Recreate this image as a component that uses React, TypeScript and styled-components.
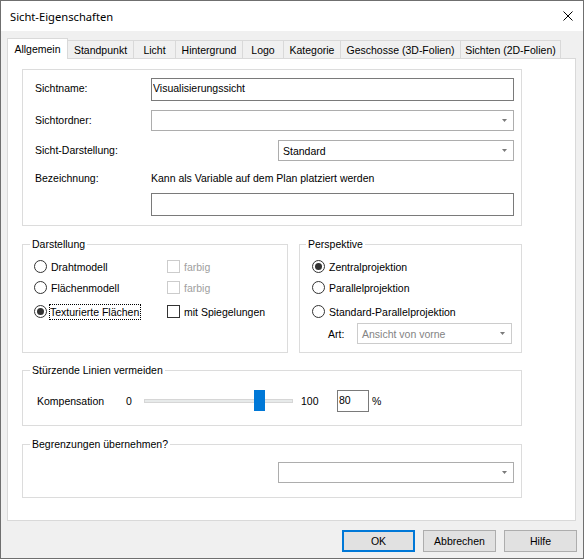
import React from 'react';
import styled, { createGlobalStyle } from 'styled-components';

const GlobalStyle = createGlobalStyle`
	* {
		box-sizing: border-box;
	}
	body {
		margin: 0;
		background: #ffffff;
		font-family: 'Liberation Sans', Arial, sans-serif;
		font-size: 10.5px;
		color: #000000;
	}
`;

const Window = styled.div`
	display: flex;
	flex-direction: column;
	width: 584px;
	height: 559px;
	border: 1px solid #6f6f6f;
	background: #f0f0f0;
`;

const TitleBar = styled.div`
	display: flex;
	align-items: center;
	justify-content: space-between;
	height: 30px;
	padding: 0 10px 0 9px;
	background: #ffffff;
`;

const Title = styled.span`
	font-family: 'Noto Sans', 'Open Sans', sans-serif;
	font-size: 11.2px;
	color: #000000;
`;

const Body = styled.div`
	display: flex;
	flex: 1;
	flex-direction: column;
	padding: 7px 7px 0 6px;
`;

const TabStrip = styled.div`
	display: flex;
	align-items: flex-end;
	height: 20px;
	position: relative;
	z-index: 1;
`;

const Tab = styled.div<{ $w: number; $active?: boolean; $first?: boolean }>`
	display: flex;
	align-items: center;
	justify-content: center;
	width: ${({ $w }) => $w}px;
	height: ${({ $active }) => ($active ? '21px' : '18px')};
	margin-bottom: ${({ $active }) => ($active ? '-1px' : '0')};
	background: ${({ $active }) => ($active ? '#ffffff' : '#f0f0f0')};
	border-top: 1px solid #d9d9d9;
	border-right: 1px solid #d9d9d9;
	border-left: ${({ $first }) => ($first ? '1px solid #d9d9d9' : 'none')};
	white-space: nowrap;
`;

const Panel = styled.div`
	display: flex;
	flex-direction: column;
	width: 569px;
	height: 463px;
	padding: 10px 0 0 14px;
	background: #ffffff;
	border: 1px solid #d9d9d9;
`;

const TopBox = styled.div`
	display: flex;
	flex-direction: column;
	width: 500px;
	height: 157px;
	padding: 8px 7px 0 12px;
	border: 1px solid #dcdcdc;
`;

const FormRow = styled.div<{ $h: number; $mt?: number }>`
	display: flex;
	align-items: center;
	height: ${({ $h }) => $h}px;
	margin-top: ${({ $mt }) => $mt || 0}px;
`;

const FieldLabel = styled.span<{ $raise?: number }>`
	width: 116px;
	flex-shrink: 0;
	line-height: 13px;
	margin-bottom: ${({ $raise }) => $raise || 0}px;
`;

const TextField = styled.input`
	flex: 1;
	height: 23px;
	padding: 0 1px 4px 1px;
	border: 1px solid #7a7a7a;
	border-radius: 0;
	background: #ffffff;
	font-family: inherit;
	font-size: inherit;
	color: #000000;
	outline: none;
`;

const Combo = styled.div<{ $w?: number; $push?: boolean; $disabled?: boolean }>`
	display: flex;
	align-items: center;
	justify-content: space-between;
	flex: ${({ $w }) => ($w ? 'none' : '1')};
	width: ${({ $w }) => ($w ? `${$w}px` : 'auto')};
	height: 21px;
	margin-left: ${({ $push }) => ($push ? 'auto' : '0')};
	padding: 0 6px 0 4px;
	border: 1px solid ${({ $disabled }) => ($disabled ? '#cccccc' : '#adadad')};
	background: #ffffff;
	color: ${({ $disabled }) => ($disabled ? '#838383' : '#000000')};
`;

const Arrow = () => (
	<svg width="5" height="3" viewBox="0 0 5 3">
		<path d="M0 0 H5 L2.5 3 Z" fill="#7a7a7a" />
	</svg>
);

const GroupRow = styled.div`
	display: flex;
	gap: 11px;
	margin-top: 12px;
`;

const Group = styled.fieldset<{ $w: number; $h: number; $mt?: number }>`
	width: ${({ $w }) => $w}px;
	height: ${({ $h }) => $h}px;
	min-width: 0;
	margin: ${({ $mt }) => $mt || 0}px 0 0 0;
	padding: 0;
	border: 1px solid #dcdcdc;
	flex-shrink: 0;
`;

const Caption = styled.legend<{ $ml: number }>`
	margin-left: ${({ $ml }) => $ml}px;
	padding: 0 2px;
	line-height: 13px;
	font-size: 10.5px;
`;

const GroupContent = styled.div<{ $pad: string; $end?: boolean }>`
	display: flex;
	flex-direction: column;
	align-items: ${({ $end }) => ($end ? 'flex-end' : 'stretch')};
	padding: ${({ $pad }) => $pad};
`;

const OptionRow = styled.div<{ $mt?: number }>`
	display: flex;
	align-items: center;
	height: 21px;
	margin-top: ${({ $mt }) => $mt || 0}px;
`;

const OptionCell = styled.div`
	display: flex;
	align-items: center;
	width: 133px;
	gap: 3px;
	flex-shrink: 0;
`;

const Radio = styled.span<{ $checked?: boolean }>`
	display: flex;
	align-items: center;
	justify-content: center;
	width: 13px;
	height: 13px;
	border: 1px solid #333333;
	border-radius: 50%;
	background: #ffffff;
	flex-shrink: 0;
	&::after {
		content: '';
		display: ${({ $checked }) => ($checked ? 'block' : 'none')};
		width: 7px;
		height: 7px;
		border-radius: 50%;
		background: #333333;
	}
`;

const Check = styled.span<{ $disabled?: boolean }>`
	width: 13px;
	height: 13px;
	border: 1px solid ${({ $disabled }) => ($disabled ? '#cccccc' : '#333333')};
	background: #ffffff;
	flex-shrink: 0;
`;

const OptionText = styled.span<{ $disabled?: boolean; $focus?: boolean }>`
	line-height: 14px;
	color: ${({ $disabled }) => ($disabled ? '#a0a0a0' : '#000000')};
	border: 1px dotted ${({ $focus }) => ($focus ? '#000000' : 'transparent')};
	margin-left: ${({ $focus }) => ($focus ? '-1px' : '0')};
	padding-right: 1px;
	white-space: nowrap;
`;

const ArtLabel = styled.span`
	width: 29px;
	margin-left: 16px;
	flex-shrink: 0;
`;

const SliderRow = styled.div`
	display: flex;
	align-items: center;
	height: 22px;
`;

const SliderText = styled.span<{ $w: number }>`
	width: ${({ $w }) => $w}px;
	flex-shrink: 0;
`;

const Track = styled.div`
	position: relative;
	width: 149px;
	height: 4px;
	margin-right: 8px;
	background: #e7eaea;
	border: 1px solid #d6d6d6;
	flex-shrink: 0;
`;

const Thumb = styled.div`
	position: absolute;
	top: -10px;
	width: 11px;
	height: 21px;
	background: #0078d7;
`;

const NumberField = styled.input`
	width: 32px;
	height: 22px;
	padding: 0 1px 3px 1px;
	border: 1px solid #7a7a7a;
	border-radius: 0;
	font-family: inherit;
	font-size: inherit;
	color: #000000;
	outline: none;
`;

const Percent = styled.span`
	margin-left: 3px;
`;

const Footer = styled.div`
	display: flex;
	justify-content: flex-end;
	gap: 8px;
	margin: 9px -1px 0 0;
`;

const Button = styled.button<{ $default?: boolean }>`
	width: 73px;
	height: 22px;
	padding: 0;
	background: #e1e1e1;
	border: ${({ $default }) => ($default ? '2px solid #0078d7' : '1px solid #adadad')};
	border-radius: 0;
	font-family: inherit;
	font-size: 10.5px;
	color: #000000;
`;

const tabs = [
	{ label: 'Allgemein', w: 61 },
	{ label: 'Standpunkt', w: 66 },
	{ label: 'Licht', w: 42 },
	{ label: 'Hintergrund', w: 67 },
	{ label: 'Logo', w: 41 },
	{ label: 'Kategorie', w: 57 },
	{ label: 'Geschosse (3D-Folien)', w: 120 },
	{ label: 'Sichten (2D-Folien)', w: 100 },
];

const compensation = 80;

export default function App() {
	return (
		<>
			<GlobalStyle />
			<Window>
				<TitleBar>
					<Title>Sicht-Eigenschaften</Title>
					<svg width="10" height="10" viewBox="0 0 10 10">
						<path d="M0.5 0.5 L9.5 9.5 M9.5 0.5 L0.5 9.5" stroke="#000" strokeWidth="1" />
					</svg>
				</TitleBar>
				<Body>
					<TabStrip>
						{tabs.map((t, i) => (
							<Tab key={t.label} $w={t.w} $active={i === 0} $first={i === 0}>
								{t.label}
							</Tab>
						))}
					</TabStrip>
					<Panel>
						<TopBox>
							<FormRow $h={23}>
								<FieldLabel $raise={3}>Sichtname:</FieldLabel>
								<TextField readOnly defaultValue="Visualisierungssicht" />
							</FormRow>
							<FormRow $h={21} $mt={9}>
								<FieldLabel>Sichtordner:</FieldLabel>
								<Combo>
									<span />
									<Arrow />
								</Combo>
							</FormRow>
							<FormRow $h={21} $mt={9}>
								<FieldLabel $raise={1}>Sicht-Darstellung:</FieldLabel>
								<Combo $w={236} $push>
									<span>Standard</span>
									<Arrow />
								</Combo>
							</FormRow>
							<FormRow $h={16} $mt={9}>
								<FieldLabel>Bezeichnung:</FieldLabel>
								<span>Kann als Variable auf dem Plan platziert werden</span>
							</FormRow>
							<FormRow $h={23} $mt={7}>
								<FieldLabel />
								<TextField readOnly defaultValue="" />
							</FormRow>
						</TopBox>

						<GroupRow>
							<Group $w={266} $h={115}>
								<Caption $ml={7}>Darstellung</Caption>
								<GroupContent $pad="5px 0 0 11px">
									<OptionRow>
										<OptionCell>
											<Radio />
											<OptionText>Drahtmodell</OptionText>
										</OptionCell>
										<OptionCell>
											<Check $disabled />
											<OptionText $disabled>farbig</OptionText>
										</OptionCell>
									</OptionRow>
									<OptionRow>
										<OptionCell>
											<Radio />
											<OptionText>Flächenmodell</OptionText>
										</OptionCell>
										<OptionCell>
											<Check $disabled />
											<OptionText $disabled>farbig</OptionText>
										</OptionCell>
									</OptionRow>
									<OptionRow $mt={3}>
										<OptionCell>
											<Radio $checked />
											<OptionText $focus>Texturierte Flächen</OptionText>
										</OptionCell>
										<OptionCell>
											<Check />
											<OptionText>mit Spiegelungen</OptionText>
										</OptionCell>
									</OptionRow>
								</GroupContent>
							</Group>

							<Group $w={223} $h={115}>
								<Caption $ml={6}>Perspektive</Caption>
								<GroupContent $pad="5px 0 0 12px">
									<OptionRow>
										<OptionCell>
											<Radio $checked />
											<OptionText>Zentralprojektion</OptionText>
										</OptionCell>
									</OptionRow>
									<OptionRow>
										<OptionCell>
											<Radio />
											<OptionText>Parallelprojektion</OptionText>
										</OptionCell>
									</OptionRow>
									<OptionRow $mt={3}>
										<OptionCell>
											<Radio />
											<OptionText>Standard-Parallelprojektion</OptionText>
										</OptionCell>
									</OptionRow>
									<OptionRow $mt={1}>
										<ArtLabel>Art:</ArtLabel>
										<Combo $w={155} $disabled>
											<span>Ansicht von vorne</span>
											<Arrow />
										</Combo>
									</OptionRow>
								</GroupContent>
							</Group>
						</GroupRow>

						<Group $w={500} $h={62} $mt={11}>
							<Caption $ml={7}>Stürzende Linien vermeiden</Caption>
							<GroupContent $pad="13px 0 0 14px">
								<SliderRow>
									<SliderText $w={89}>Kompensation</SliderText>
									<SliderText $w={18}>0</SliderText>
									<Track>
										<Thumb style={{ left: `${(147 - 11) * (compensation / 100)}px` }} />
									</Track>
									<SliderText $w={36}>100</SliderText>
									<NumberField readOnly defaultValue={String(compensation)} />
									<Percent>%</Percent>
								</SliderRow>
							</GroupContent>
						</Group>

						<Group $w={500} $h={60} $mt={12}>
							<Caption $ml={7}>Begrenzungen übernehmen?</Caption>
							<GroupContent $pad="11px 7px 0 0" $end>
								<Combo $w={236}>
									<span />
									<Arrow />
								</Combo>
							</GroupContent>
						</Group>
					</Panel>
					<Footer>
						<Button $default>OK</Button>
						<Button>Abbrechen</Button>
						<Button>Hilfe</Button>
					</Footer>
				</Body>
			</Window>
		</>
	);
}
